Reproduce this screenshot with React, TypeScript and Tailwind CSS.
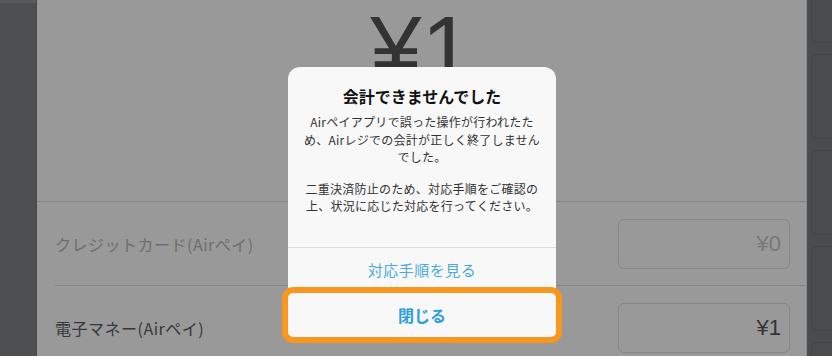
const jp = { fontFamily: '"Noto Sans CJK JP", "Noto Sans", sans-serif' };

function AmountRow({ label, value, dim }: { label: string; value: string; dim?: boolean }) {
    return (
        <div className="flex h-[83px] items-center justify-between pr-[16px]">
            <p className={`text-[16px] leading-none tracking-[0.5px] ${dim ? 'text-[#6e6e6e]' : 'text-[#383838]'}`}>{label}</p>
            <div className="flex h-[50px] w-[172px] items-center justify-end rounded-[6px] border border-[#858585] px-[8px]">
                <span className={`text-[22px] leading-none ${dim ? 'text-[#787878]' : 'text-[#333333]'}`} style={{ fontFamily: '"Liberation Sans", sans-serif' }}>{value}</span>
            </div>
        </div>
    );
}

export default function App() {
    return (
        <div className="relative flex h-[356px] w-[832px] overflow-hidden bg-[#999999]" style={jp}>
            {/* left rail */}
            <div className="flex w-[37px] flex-col border-r border-[#47484a] bg-[#4e4f51]">
                <div className="h-[3px] bg-[#58595b]"></div>
            </div>

            {/* main */}
            <div className="flex flex-1 flex-col">
                <div className="flex h-[202px] shrink-0 justify-center border-b border-[#878787]">
                    <span className="mt-[3px] text-[92px] leading-none text-[#333333]" style={{ fontFamily: '"Liberation Sans", sans-serif' }}>¥1</span>
                </div>
                <div className="shrink-0 pl-[18px]">
                    <div className="border-b border-[#878787]">
                        <AmountRow label="クレジットカード(Airペイ)" value="¥0" dim />
                    </div>
                    <AmountRow label="電子マネー(Airペイ)" value="¥1" />
                </div>
            </div>

            {/* right rail */}
            <div className="flex w-[26px] flex-col gap-[11px] border-l border-[#8d8d8d] bg-[#4b4c4e] pl-[4px]">
                <div className="-mt-[42px] h-[85px] shrink-0 rounded-l-[6px] border border-r-0 border-[#444547]"></div>
                <div className="h-[85px] shrink-0 rounded-l-[6px] border border-r-0 border-[#444547]"></div>
                <div className="h-[85px] shrink-0 rounded-l-[6px] border border-r-0 border-[#444547]"></div>
                <div className="h-[85px] shrink-0 rounded-l-[6px] border border-r-0 border-[#444547]"></div>
                <div className="h-[85px] shrink-0 rounded-l-[6px] border border-r-0 border-[#444547]"></div>
            </div>

            {/* alert */}
            <div className="absolute left-[282px] top-[67px] w-[280px]">
                <div className="mx-[6px] flex flex-col rounded-t-[12px] bg-[#f8f8f8]">
                    <div className="flex h-[180px] flex-col items-center pt-[18px] text-center">
                        <p className="text-[16px] font-bold leading-[22px] text-[#111111]">会計できませんでした</p>
                        <p className="mt-[6px] text-[12px] leading-[17.5px] tracking-[0.25px] text-[#333333]">
                            Airペイアプリで誤った操作が行われたた<br />
                            め、Airレジでの会計が正しく終了しません<br />
                            でした。
                        </p>
                        <p className="mt-[14px] text-[12px] leading-[17px] tracking-[0.25px] text-[#333333]">
                            二重決済防止のため、対応手順をご確認の<br />
                            上、状況に応じた対応を行ってください。
                        </p>
                    </div>
                    <div className="flex h-[41px] items-center justify-center border-t border-[#dddddd] pt-[4px]">
                        <span className="text-[15px] tracking-[0.5px] text-[#4aa9de]">対応手順を見る</span>
                    </div>
                </div>
                <div className="-mt-[1px] flex h-[56px] items-center justify-center rounded-[11px] border-[6px] border-[#f8961e] bg-[#f8f8f8]">
                    <span className="text-[16px] font-bold text-[#2b9fd9]">閉じる</span>
                </div>
            </div>
        </div>
    );
}
